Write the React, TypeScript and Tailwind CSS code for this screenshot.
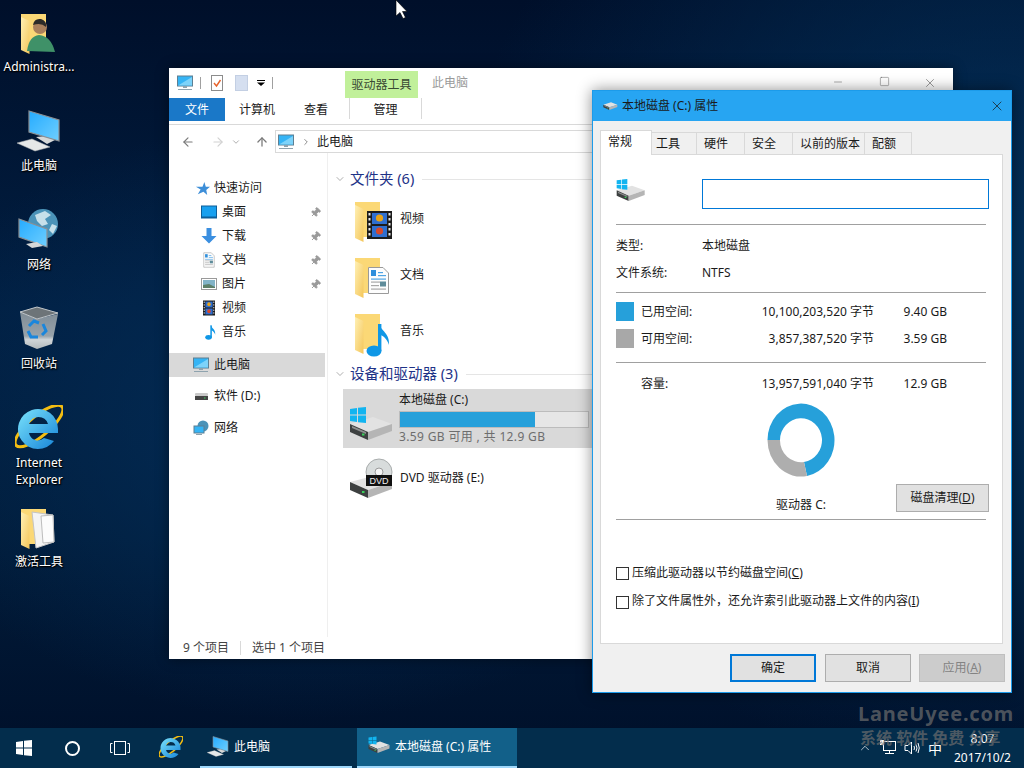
import React from 'react';
import { ArrowLeft, ArrowRight, ArrowUp, ChevronDown, ChevronRight, ChevronUp, Minus, Pin, Square, X } from 'lucide-react';

const WinLogo = ({ x = 0, y = 0, s = 16, fill = '#12b4f0' }: { x?: number; y?: number; s?: number; fill?: string }) => (
  <g fill={fill} transform={`translate(${x} ${y}) scale(${s / 16})`}>
    <polygon points="0,2 7,1 7,7.5 0,7.5" />
    <polygon points="8,0.8 16,0 16,7.5 8,7.5" />
    <polygon points="0,8.5 7,8.5 7,15 0,14" />
    <polygon points="8,8.5 16,8.5 16,16 8,15.2" />
  </g>
);

const Drive = ({ win = true, className = 'w-12 h-12' }: { win?: boolean; className?: string }) => (
  <svg viewBox="0 0 48 48" className={className}>
    <polygon points="1,20 24,13 43,20 19,28" fill="#e2e2e2" />
    <polygon points="1,20 19,28 19,36 1,28" fill="#3d4040" />
    <polygon points="19,28 43,20 43,27 19,36" fill="#b5b5b5" />
    <polygon points="3,22 17,28 17,30 3,24" fill="#8d8f8f" />
    <rect x="13" y="29.5" width="2.5" height="2" fill="#38d05a" />
    {win && <WinLogo x={1} y={3} />}
  </svg>
);

const DvdDrive = () => (
  <svg viewBox="0 0 48 48" className="w-12 h-12">
    <circle cx="30" cy="18" r="13" fill="#d8dcdc" stroke="#a9adad" />
    <circle cx="30" cy="18" r="4" fill="#f4f4f4" stroke="#9a9a9a" />
    <polygon points="1,28 24,22 43,28 19,36" fill="#e2e2e2" />
    <polygon points="1,28 19,36 19,44 1,36" fill="#3d4040" />
    <polygon points="19,36 43,28 43,35 19,44" fill="#b5b5b5" />
    <rect x="13" y="37" width="2.5" height="2" fill="#38d05a" />
    <rect x="17" y="21" width="26" height="11" fill="#111" />
    <text x="30" y="30" textAnchor="middle" fontSize="9" fill="#f2f2f2" fontFamily="Liberation Sans, sans-serif">DVD</text>
  </svg>
);

const FolderBase = ({ children }: { children?: React.ReactNode }) => (
  <svg viewBox="0 0 48 48" className="w-12 h-12">
    <defs>
      <linearGradient id="flap" x1="0" y1="0" x2="1" y2="1">
        <stop offset="0" stopColor="#fff0b4" />
        <stop offset="1" stopColor="#f4c65a" />
      </linearGradient>
    </defs>
    <polygon points="6,5 31,5 31,40 14,40 6,36" fill="#fbd876" />
    <polygon points="6,8 14.5,12 14.5,45 6,41" fill="url(#flap)" />
    {children}
  </svg>
);

const FilmArt = ({ x = 18, y = 14, w = 25, h = 28 }: { x?: number; y?: number; w?: number; h?: number }) => (
  <g transform={`translate(${x} ${y}) scale(${w / 25} ${h / 28})`}>
    <rect width="25" height="28" fill="#1c1c1c" />
    <rect x="5" y="2" width="15" height="11" fill="#2f6fd0" />
    <rect x="5" y="15" width="15" height="11" fill="#2f6fd0" />
    <circle cx="12.5" cy="7" r="3.6" fill="#e8a317" />
    <circle cx="12.5" cy="20" r="3.6" fill="#d9482b" />
    {[2, 7, 12, 17, 22].map((t) => (
      <g key={t} fill="#e8e8e8">
        <rect x="1.5" y={t} width="2" height="2.5" />
        <rect x="21.5" y={t} width="2" height="2.5" />
      </g>
    ))}
  </g>
);

const DocArt = ({ x = 19, y = 14, w = 21, h = 27 }: { x?: number; y?: number; w?: number; h?: number }) => (
  <g transform={`translate(${x} ${y}) scale(${w / 21} ${h / 27})`}>
    <polygon points="0.5,0.5 15,0.5 20.5,6 20.5,26.5 0.5,26.5" fill="#fdfdfd" stroke="#9a9a9a" />
    <rect x="3" y="3" width="5" height="6" fill="#2f8fdc" />
    <rect x="10" y="5" width="5" height="1.2" fill="#4fa4e4" />
    <rect x="10" y="8" width="8" height="1.2" fill="#4fa4e4" />
    <rect x="3" y="11.5" width="15" height="1.2" fill="#4fa4e4" />
    <rect x="3" y="14.5" width="9" height="1.2" fill="#a8a8a8" />
    <rect x="12" y="14.5" width="6" height="5" fill="#5f8c9a" />
    <rect x="3" y="18" width="8" height="1.2" fill="#a8a8a8" />
    <rect x="3" y="21.5" width="15" height="1.2" fill="#a8a8a8" />
  </g>
);

const NoteArt = () => (
  <g fill="#0f97e6">
    <ellipse cx="25" cy="42" rx="7.5" ry="5.5" />
    <rect x="29" y="15" width="3.4" height="27" />
    <path d="M30 15 C32 22 41 24 40 36 C39 33 36 27 31 26 Z" />
  </g>
);

const Monitor = ({ className = 'w-4 h-4' }: { className?: string }) => (
  <svg viewBox="0 0 16 16" className={className}>
    <rect x="0.5" y="1" width="15" height="10" fill="#35b4f5" stroke="#5d7f92" />
    <polygon points="1,10.5 15,2 15,10.5" fill="#7dd3fa" />
    <rect x="6" y="11" width="4" height="2" fill="#8fa3ae" />
    <rect x="1" y="14" width="14" height="1" fill="#8fa3ae" />
  </svg>
);

const PcBig = ({ className = 'w-12 h-12' }: { className?: string }) => (
  <svg viewBox="0 0 48 48" className={className}>
    <defs>
      <linearGradient id="scr" x1="0" y1="0" x2="1" y2="1">
        <stop offset="0" stopColor="#25abff" />
        <stop offset="1" stopColor="#6fcfff" />
      </linearGradient>
    </defs>
    <polygon points="21,29 30,28 40,32 32,36" fill="#d6d8d8" />
    <polygon points="14,3 44,12 44,33 14,24" fill="url(#scr)" stroke="#8a8f94" strokeWidth="1.2" />
    <polygon points="2,35 17,31 35,39 20,43" fill="#e6e8e8" stroke="#b2b5b5" strokeWidth="0.5" />
  </svg>
);

const NetBig = ({ className = 'w-12 h-12' }: { className?: string }) => (
  <svg viewBox="0 0 48 48" className={className}>
    <circle cx="28" cy="17" r="15" fill="#4b93b8" />
    <path d="M20 8 L30 4 L36 8 L30 12 L33 17 L27 19 L22 14 Z M37 17 L42 19 L38 27 L34 23 Z" fill="#c7e0ea" />
    <polygon points="4,12 32,22 32,40 4,30" fill="url(#scr2)" stroke="#8a8f94" strokeWidth="1.2" />
    <polygon points="11,37 22,35 28,39 17,41" fill="#d6d8d8" />
    <defs>
      <linearGradient id="scr2" x1="0" y1="0" x2="1" y2="1">
        <stop offset="0" stopColor="#25abff" />
        <stop offset="1" stopColor="#6fcfff" />
      </linearGradient>
    </defs>
  </svg>
);

const RecycleBin = () => (
  <svg viewBox="0 0 48 48" className="w-12 h-12">
    <defs>
      <linearGradient id="bin" x1="0" y1="0" x2="0" y2="1">
        <stop offset="0" stopColor="#7f8c96" />
        <stop offset="0.65" stopColor="#98a3ab" />
        <stop offset="0.75" stopColor="#d0d5d8" />
        <stop offset="1" stopColor="#b4babd" />
      </linearGradient>
    </defs>
    <polygon points="5,6 10,38 22,43 37,38 43,8 22,13" fill="url(#bin)" />
    <polygon points="5,6 22,1 43,7 22,13" fill="#6d7478" stroke="#c2c7ca" strokeWidth="1" />
    <g fill="none" stroke="#1a86dc" strokeWidth="3">
      <path d="M14 20 L19 15 L24 17" />
      <path d="M28 18 L31 25 L27 29" />
      <path d="M23 31 L16 31 L13 25" />
    </g>
  </svg>
);

const IeLogo = ({ className = 'w-12 h-12' }: { className?: string }) => (
  <svg viewBox="0 0 48 48" className={className}>
    <defs>
      <linearGradient id="ie" x1="0" y1="0" x2="1" y2="1">
        <stop offset="0" stopColor="#7be3fb" />
        <stop offset="1" stopColor="#1583d8" />
      </linearGradient>
    </defs>
    <ellipse cx="24" cy="21" rx="30" ry="10" fill="none" stroke="#f3bd12" strokeWidth="3" transform="rotate(-40 24 21)" />
    <path d="M43 28 V24 A20 20 0 1 0 39 36 L29 33 A9 9 0 0 1 14 28 Z M14 19 A10 10 0 0 1 33 19 Z" fill="url(#ie)" fillRule="evenodd" />
  </svg>
);

const DESKTOP = [
  { key: 'admin', label: 'Administra...' },
  { key: 'pc', label: '此电脑' },
  { key: 'net', label: '网络' },
  { key: 'bin', label: '回收站' },
  { key: 'ie', label: 'Internet Explorer' },
  { key: 'tool', label: '激活工具' },
];

const desktopIcon = (key: string) => {
  if (key === 'admin')
    return (
      <FolderBase>
        <circle cx="25" cy="18" r="7" fill="#a97f5c" />
        <path d="M18 16 Q19 9 26 10 Q32 12 31 18 Q26 13 18 16 Z" fill="#2c2a28" />
        <path d="M12 42 Q14 27 24 26 Q36 27 40 43 Z" fill="#3f9168" />
      </FolderBase>
    );
  if (key === 'pc') return <PcBig />;
  if (key === 'net') return <NetBig />;
  if (key === 'bin') return <RecycleBin />;
  if (key === 'ie') return <IeLogo />;
  return (
    <FolderBase>
      <polygon points="17,8 38,11 39,38 21,44" fill="#f4f4f4" stroke="#c4c4c4" />
      <polygon points="26,12 38,11 39,38 28,39" fill="#fcfcfc" stroke="#bdbdbd" />
    </FolderBase>
  );
};

const NAV_QUICK = [
  { label: '桌面', pin: true, icon: <svg viewBox="0 0 16 16" className="w-4 h-4"><rect x="0.5" y="2" width="15" height="12" fill="#18a0ef" stroke="#0d5f99" /><rect x="1" y="12.5" width="14" height="1.5" fill="#0d5f99" /></svg> },
  { label: '下载', pin: true, icon: <svg viewBox="0 0 16 16" className="w-4 h-4"><polygon points="5.5,0 10.5,0 10.5,8 15.5,8 8,15.5 0.5,8 5.5,8" fill="#3b8fe0" /></svg> },
  { label: '文档', pin: true, icon: <svg viewBox="0 0 16 16" className="w-4 h-4"><DocArt x={2.5} y={0.5} w={11} h={15} /></svg> },
  { label: '图片', pin: true, icon: <svg viewBox="0 0 16 16" className="w-4 h-4"><rect x="0.5" y="2.5" width="15" height="11" fill="#fff" stroke="#9a9a9a" /><rect x="2" y="4" width="12" height="8" fill="#82b3c7" /><polygon points="2,12 2,9 8,8 14,11 14,12" fill="#5d7f68" /></svg> },
  { label: '视频', pin: false, icon: <svg viewBox="0 0 16 16" className="w-4 h-4"><FilmArt x={2} y={0.5} w={12} h={15} /></svg> },
  { label: '音乐', pin: false, icon: <svg viewBox="10 12 32 36" className="w-4 h-4"><NoteArt /></svg> },
];

const TABS = [
  { label: '工具', w: 'w-[45px] pl-[4px]' },
  { label: '硬件', w: 'w-[48px] pl-[7px]' },
  { label: '安全', w: 'w-[48px] pl-[7px]' },
  { label: '以前的版本', w: 'w-[72px] pl-[7px]' },
  { label: '配额', w: 'w-[47px] pl-[7px]' },
];

const Rule = ({ className = '' }: { className?: string }) => <div className={`h-px bg-[#a0a0a0] ${className}`} />;

const Explorer = () => (
  <div className="absolute left-[169px] top-[68px] w-[784px] h-[591px] bg-white flex flex-col overflow-hidden shadow-[0_0_12px_rgba(0,0,0,0.45)] text-[12px] text-[#1a1a1a]">
    {/* title row */}
    <div className="h-[30px] flex items-start shrink-0">
      <div className="flex items-center h-[30px] pl-[8px] gap-[7px] w-[176px]">
        <Monitor />
        <div className="w-px h-[12px] bg-[#a0a0a0]" />
        <svg viewBox="0 0 12 16" className="w-[12px] h-[16px] ml-[3px]"><rect x="0.5" y="0.5" width="11" height="15" fill="#fff" stroke="#8c8c8c" /><path d="M3 8 L5.5 11 L9.5 5" fill="none" stroke="#e8622a" strokeWidth="1.4" /></svg>
        <div className="w-[13px] h-[16px] ml-[5px] bg-[#d5dff0] border border-[#c3cfe3]" />
        <svg viewBox="0 0 8 6" className="w-[8px] h-[6px] ml-[2px]"><rect width="8" height="1" /><polygon points="0,2.5 8,2.5 4,6" /></svg>
        <div className="w-px h-[12px] bg-[#a0a0a0]" />
      </div>
      <div className="mt-[3px] w-[73px] h-[27px] bg-[#c1f09a] flex items-center justify-center text-[#3a4a33]">驱动器工具</div>
      <div className="ml-[14px] h-[30px] flex items-center text-[#9a9a9a]">此电脑</div>
      <div className="flex-1" />
      <div className="flex w-[138px] pt-[8px] text-[#555]">
        <div className="w-[46px] flex justify-center"><Minus size={12} strokeWidth={1} /></div>
        <div className="w-[46px] flex justify-center"><Square size={11} strokeWidth={1} /></div>
        <div className="w-[46px] flex justify-center"><X size={14} strokeWidth={1} /></div>
      </div>
    </div>
    {/* ribbon tabs */}
    <div className="h-[23px] flex shrink-0">
      <div className="w-[56px] bg-[#1a78c8] text-white flex items-center justify-center pt-px">文件</div>
      <div className="w-[58px] flex items-center justify-center ml-[3px] pt-px">计算机</div>
      <div className="w-[60px] flex items-center justify-center pt-px">查看</div>
      <div className="w-[73px] ml-[3px] h-[21px] bg-white border-x border-[#d9d9d9] flex items-center justify-center pt-[3px]">管理</div>
    </div>
    <div className="h-[4px] shrink-0 border-b border-[#d9d9d9]" />
    {/* address bar */}
    <div className="h-[28px] flex items-center shrink-0 pt-[5px]">
      <div className="w-[106px] flex items-center text-[#7a7a7a]">
        <ArrowLeft size={14} strokeWidth={2} className="ml-[12px]" />
        <ArrowRight size={14} strokeWidth={2} className="ml-[16px] text-[#d2d2d2]" />
        <ChevronDown size={10} strokeWidth={2} className="ml-[6px] text-[#a0a0a0]" />
        <ArrowUp size={14} strokeWidth={2.2} className="ml-[14px]" />
      </div>
      <div className="flex-1 h-[23px] border border-[#d9d9d9] flex items-center pl-[2px]">
        <Monitor />
        <ChevronRight size={10} className="ml-[7px] text-[#777]" strokeWidth={2} />
        <span className="ml-[6px]">此电脑</span>
      </div>
    </div>
    {/* body */}
    <div className="flex-1 flex min-h-0">
      <div className="w-[159px] shrink-0 border-r border-[#efefef] pt-[23px]">
        <div className="h-[24px] flex items-center pl-[26px]">
          <svg viewBox="0 0 16 16" className="w-[15px] h-[15px]"><polygon points="10,1 11.5,6 16,6 12,9.5 13,15 9,11.5 3,14 6,9 1,6 8,6" fill="#3d8ed8" /></svg>
          <span className="ml-[4px]">快速访问</span>
        </div>
        {NAV_QUICK.map((n) => (
          <div key={n.label} className="h-[24px] flex items-center pl-[32px] pr-[3px] mr-[2px]">
            {n.icon}
            <span className="ml-[5px] flex-1">{n.label}</span>
            {n.pin && <Pin size={11} fill="#9a9a9a" stroke="#9a9a9a" className="rotate-45 mr-[1px]" />}
          </div>
        ))}
        <div className="h-[24px] mt-[9px] mr-[2px] flex items-center pl-[24px] bg-[#d9d9d9]">
          <Monitor />
          <span className="ml-[5px]">此电脑</span>
        </div>
        <div className="h-[24px] mt-[7px] flex items-center pl-[24px]">
          <svg viewBox="0 0 16 16" className="w-4 h-4"><rect x="2" y="5" width="13" height="3" rx="1" fill="#c9c9c9" /><rect x="2" y="8" width="13" height="4" fill="#444" /><rect x="11" y="9.5" width="1.5" height="1" fill="#3bd05a" /></svg>
          <span className="ml-[5px]">软件 (D:)</span>
        </div>
        <div className="h-[24px] mt-[8px] flex items-center pl-[24px]">
          <svg viewBox="0 0 16 16" className="w-4 h-4"><circle cx="10" cy="6" r="5.5" fill="#4b93b8" /><rect x="1" y="6" width="10" height="7" fill="#35b4f5" stroke="#5d7f92" /><rect x="3" y="14" width="6" height="1" fill="#8fa3ae" /></svg>
          <span className="ml-[5px]">网络</span>
        </div>
      </div>
      <div className="flex-1 pt-[14px] pl-[6px]">
        <div className="h-[24px] flex items-center text-[14.5px] text-[#1e3287]">
          <ChevronDown size={12} strokeWidth={1.2} className="text-[#777] ml-[0px]" />
          <span className="ml-[4px]">文件夹 (6)</span>
          <div className="flex-1 h-px bg-[#e5e5e5] ml-[8px]" />
        </div>
        {[
          { label: '视频', art: <FilmArt /> },
          { label: '文档', art: <DocArt /> },
          { label: '音乐', art: <NoteArt /> },
        ].map((f) => (
          <div key={f.label} className="h-[56px] flex items-center pl-[15px]">
            <div className="mt-[4px]"><FolderBase>{f.art}</FolderBase></div>
            <span className="ml-[3px]">{f.label}</span>
          </div>
        ))}
        <div className="h-[24px] mt-[3px] flex items-center text-[14.5px] text-[#1e3287]">
          <ChevronDown size={12} strokeWidth={1.2} className="text-[#777]" />
          <span className="ml-[4px]">设备和驱动器 (3)</span>
          <div className="flex-1 h-px bg-[#e5e5e5] ml-[8px]" />
        </div>
        <div className="mt-[3px] ml-[9px] h-[59px] bg-[#d9d9d9] flex items-center pl-[6px]">
          <div className="mt-[19px]"><Drive /></div>
          <div className="ml-[2px] flex flex-col w-[190px]">
            <span className="leading-[16px] h-[16px] mt-[-1px]">本地磁盘 (C:)</span>
            <div className="h-[17px] mt-[3px] border border-[#bcbcbc] bg-[#e6e6e6]">
              <div className="w-[72%] h-full bg-[#26a0da]" />
            </div>
            <span className="mt-[1px] leading-[16px] text-[#6d6d6d] tracking-[0.35px]">3.59 GB 可用 , 共 12.9 GB</span>
          </div>
        </div>
        <div className="ml-[9px] h-[58px] flex items-center pl-[6px]">
          <div className="mt-[2px]"><DvdDrive /></div>
          <span className="ml-[3px] mb-[-2px]">DVD 驱动器 (E:)</span>
        </div>
      </div>
    </div>
    {/* status bar */}
    <div className="h-[22px] flex items-center pl-[14px] shrink-0 text-[#444]">
      <span>9 个项目</span>
      <div className="w-px h-[14px] bg-[#d9d9d9] mx-[11px]" />
      <span>选中 1 个项目</span>
    </div>
  </div>
);

const UsageRow = ({ color, label, bytes, size }: { color: string; label: string; bytes: string; size: string }) => (
  <div className="h-[27px] flex items-center pr-[39px]">
    <div className={`w-[18px] h-[19px] mr-[7px] ${color}`} />
    <span className="flex-1">{label}</span>
    <span>{bytes}</span>
    <span className="w-[73px] text-right">{size}</span>
  </div>
);

const Dialog = () => (
  <div className="absolute left-[592px] top-[90px] w-[420px] h-[603px] bg-[#f0f0f0] border border-[#1c9bea] flex flex-col text-[12px] text-[#1a1a1a] shadow-[0_0_14px_rgba(0,0,0,0.45)]">
    <div className="h-[30px] bg-[#27a5f2] flex items-center shrink-0">
      <Drive win={false} className="w-[16px] h-[16px] ml-[10px]" />
      <span className="ml-[3px]">本地磁盘 (C:) 属性</span>
      <X size={16} strokeWidth={1.1} className="ml-auto mr-[6px]" />
    </div>
    <div className="flex items-end px-[7px] pt-[9px] h-[34px] shrink-0 relative z-10 mb-[-1px]">
      <div className="w-[52px] h-[25px] bg-white border border-b-0 border-[#d9d9d9] flex items-center pl-[7px] pb-[2px]">常规</div>
      {TABS.map((t) => (
        <div key={t.label} className={`${t.w} h-[23px] border border-l-0 border-[#d9d9d9] flex items-center bg-[#f0f0f0]`}>{t.label}</div>
      ))}
    </div>
    <div className="ml-[7px] w-[403px] h-[490px] bg-white border border-[#d9d9d9] pl-[15px] pr-[16px] shrink-0">
      <div className="flex items-start pt-[24px]">
        <div className="w-[86px] h-[30px] shrink-0"><Drive className="w-[32px] h-[32px] mt-[-2px]" /></div>
        <div className="w-[287px] h-[30px] border border-[#0078d7] bg-white shrink-0" />
      </div>
      <Rule className="mt-[15px]" />
      <div className="mt-[7px]">
        <div className="h-[27px] flex items-center"><span className="w-[86px]">类型:</span><span>本地磁盘</span></div>
        <div className="h-[27px] flex items-center"><span className="w-[86px]">文件系统:</span><span>NTFS</span></div>
      </div>
      <Rule className="mt-[6px]" />
      <div className="mt-[5px]">
        <UsageRow color="bg-[#26a0da]" label="已用空间:" bytes="10,100,203,520 字节" size="9.40 GB" />
        <UsageRow color="bg-[#a8a8a8]" label="可用空间:" bytes="3,857,387,520 字节" size="3.59 GB" />
      </div>
      <Rule className="mt-[10px]" />
      <div className="mt-[7px] h-[27px] flex items-center pl-[25px] pr-[39px]">
        <span className="flex-1">容量:</span>
        <span>13,957,591,040 字节</span>
        <span className="w-[73px] text-right">12.9 GB</span>
      </div>
      <div className="h-[122px] grid grid-cols-[1fr_68px_1fr]">
        <div />
        <div className="flex flex-col items-center pt-[6px]">
          <svg viewBox="0 0 68 74" className="w-[68px] h-[74px] shrink-0">
            <path d="M0.5 37 A33.5 36.5 0 1 1 40 73 L37 59 A21 22 0 1 0 13 37 Z" fill="#26a0da" />
            <path d="M0.5 37 A33.5 36.5 0 0 0 40 73 L37 59 A21 22 0 0 1 13 37 Z" fill="#aeaeae" />
          </svg>
          <span className="mt-[19px] leading-[17px] whitespace-nowrap">驱动器 C:</span>
        </div>
        <div className="flex justify-end">
          <button className="mt-[87px] mr-[-3px] w-[93px] h-[28px] bg-[#e1e1e1] border border-[#adadad]">磁盘清理(<u>D</u>)</button>
        </div>
      </div>
      <Rule />
      <div className="mt-[46px] h-[14px] flex items-center">
        <div className="w-[13px] h-[13px] border border-[#333] mr-[3px]" />
        <span>压缩此驱动器以节约磁盘空间(<u>C</u>)</span>
      </div>
      <div className="mt-[15px] h-[14px] flex items-center">
        <div className="w-[13px] h-[13px] border border-[#333] mr-[3px]" />
        <span className="mt-[-2px]">除了文件属性外，还允许索引此驱动器上文件的内容(<u>I</u>)</span>
      </div>
    </div>
    <div className="flex justify-end pr-[6px] pt-[10px]">
      <button className="w-[86px] h-[28px] bg-[#e1e1e1] border-2 border-[#0078d7]">确定</button>
      <button className="w-[86px] h-[28px] ml-[9px] bg-[#e1e1e1] border border-[#adadad]">取消</button>
      <button className="w-[86px] h-[28px] ml-[8px] bg-[#cccccc] border border-[#bfbfbf] text-[#838383]">应用(<u>A</u>)</button>
    </div>
  </div>
);

const Taskbar = () => (
  <div className="absolute left-0 right-0 bottom-0 h-[40px] bg-[#032d4c] flex items-stretch text-[12px] text-white">
    <div className="w-[48px] flex items-center justify-center">
      <svg viewBox="0 0 16 16" className="w-4 h-4"><WinLogo fill="#fff" /></svg>
    </div>
    <div className="w-[48px] flex items-center justify-center">
      <div className="w-[15px] h-[15px] rounded-full border-2 border-white" />
    </div>
    <div className="w-[48px] flex items-center justify-center">
      <svg viewBox="0 0 20 14" className="w-[20px] h-[14px]" fill="none" stroke="#fff" strokeWidth="1">
        <rect x="4.5" y="0.5" width="11" height="13" />
        <path d="M2.5 2.5 H0.5 V11.5 H2.5 M17.5 2.5 H19.5 V11.5 H17.5" />
      </svg>
    </div>
    <div className="w-[56px] flex items-center justify-center pr-[2px]"><IeLogo className="w-[24px] h-[24px]" /></div>
    <div className="w-[152px] flex items-center border-b-2 border-[#9fd8fb]">
      <PcBig className="w-[24px] h-[24px] ml-[6px]" />
      <span className="ml-[4px]">此电脑</span>
    </div>
    <div className="w-[160px] ml-[5px] flex items-center bg-[#126089] border-b-2 border-[#9fd8fb]">
      <Drive className="w-[24px] h-[24px] ml-[11px]" />
      <span className="ml-[3px]">本地磁盘 (C:) 属性</span>
    </div>
    <div className="flex-1 flex items-center justify-end">
      <ChevronUp size={14} strokeWidth={1.2} className="mr-[8px]" />
      <svg viewBox="0 0 16 16" className="w-4 h-4 mr-[8px]" fill="none" stroke="#fff"><rect x="3.5" y="1.5" width="12" height="9" /><path d="M9.5 10.5 V13 M5 13.5 H14" /><rect x="0.5" y="0.5" width="3" height="4" fill="#fff" /></svg>
      <svg viewBox="0 0 16 16" className="w-4 h-4 mr-[2px]" fill="none" stroke="#fff"><path d="M1 5.5 H4 L7.5 2 V14 L4 10.5 H1 Z" /><path d="M10 6 Q11 8 10 10 M12 4.5 Q14 8 12 11.5 M14 3 Q16.5 8 14 13" /></svg>
      <span className="text-[14px] w-[26px] text-center">中</span>
      <div className="w-[59px] ml-[5px] flex flex-col items-center leading-[19px] whitespace-nowrap">
        <span>8:07</span>
        <span>2017/10/2</span>
      </div>
      <div className="w-[12px]" />
    </div>
  </div>
);

export default function App() {
  return (
    <div className="relative w-[1024px] h-[768px] overflow-hidden bg-[#011a38] bg-[radial-gradient(ellipse_420px_300px_at_300px_420px,#032c56_0%,rgba(3,44,86,0)_100%),radial-gradient(ellipse_560px_520px_at_1010px_260px,#03305a_0%,rgba(3,48,90,0)_100%),linear-gradient(180deg,#000f2a_0%,#011f42_40%,#011c3a_70%,#000f29_100%)] font-['Noto_Sans','Noto_Sans_CJK_SC',sans-serif]">
      {/* desktop icons */}
      <div className="absolute left-0 top-[9px] w-[78px] flex flex-col">
        {DESKTOP.map((d) => (
          <div key={d.key} className="h-[99px] flex flex-col items-center">
            <div className="w-12 h-12 shrink-0">{desktopIcon(d.key)}</div>
            <span className="mt-px text-[12px] leading-[17px] text-white text-center [text-shadow:0_1px_2px_#000,1px_1px_1px_#000]">{d.label}</span>
          </div>
        ))}
      </div>

      {/* mouse pointer */}
      <svg viewBox="0 0 12 19" className="absolute left-[395px] top-0 w-[12px] h-[19px]">
        <polygon points="1,0 1,16 5,12.5 8,18.5 10.5,17.5 7.5,11.5 12,11.5" fill="#fff" stroke="#000" strokeWidth="0.6" />
      </svg>

      <Explorer />
      <Dialog />
      <Taskbar />

      {/* watermark */}
      <div className="absolute left-[858px] top-[702px] w-[160px] pointer-events-none font-bold text-[#6e6e6e]/70 leading-[24px] whitespace-nowrap">
        <div className="text-[20px] tracking-[0.8px]">LaneUyee.com</div>
        <div className="text-[16px] ml-[2px]">系统 软件 免费 分享</div>
      </div>
    </div>
  );
}
